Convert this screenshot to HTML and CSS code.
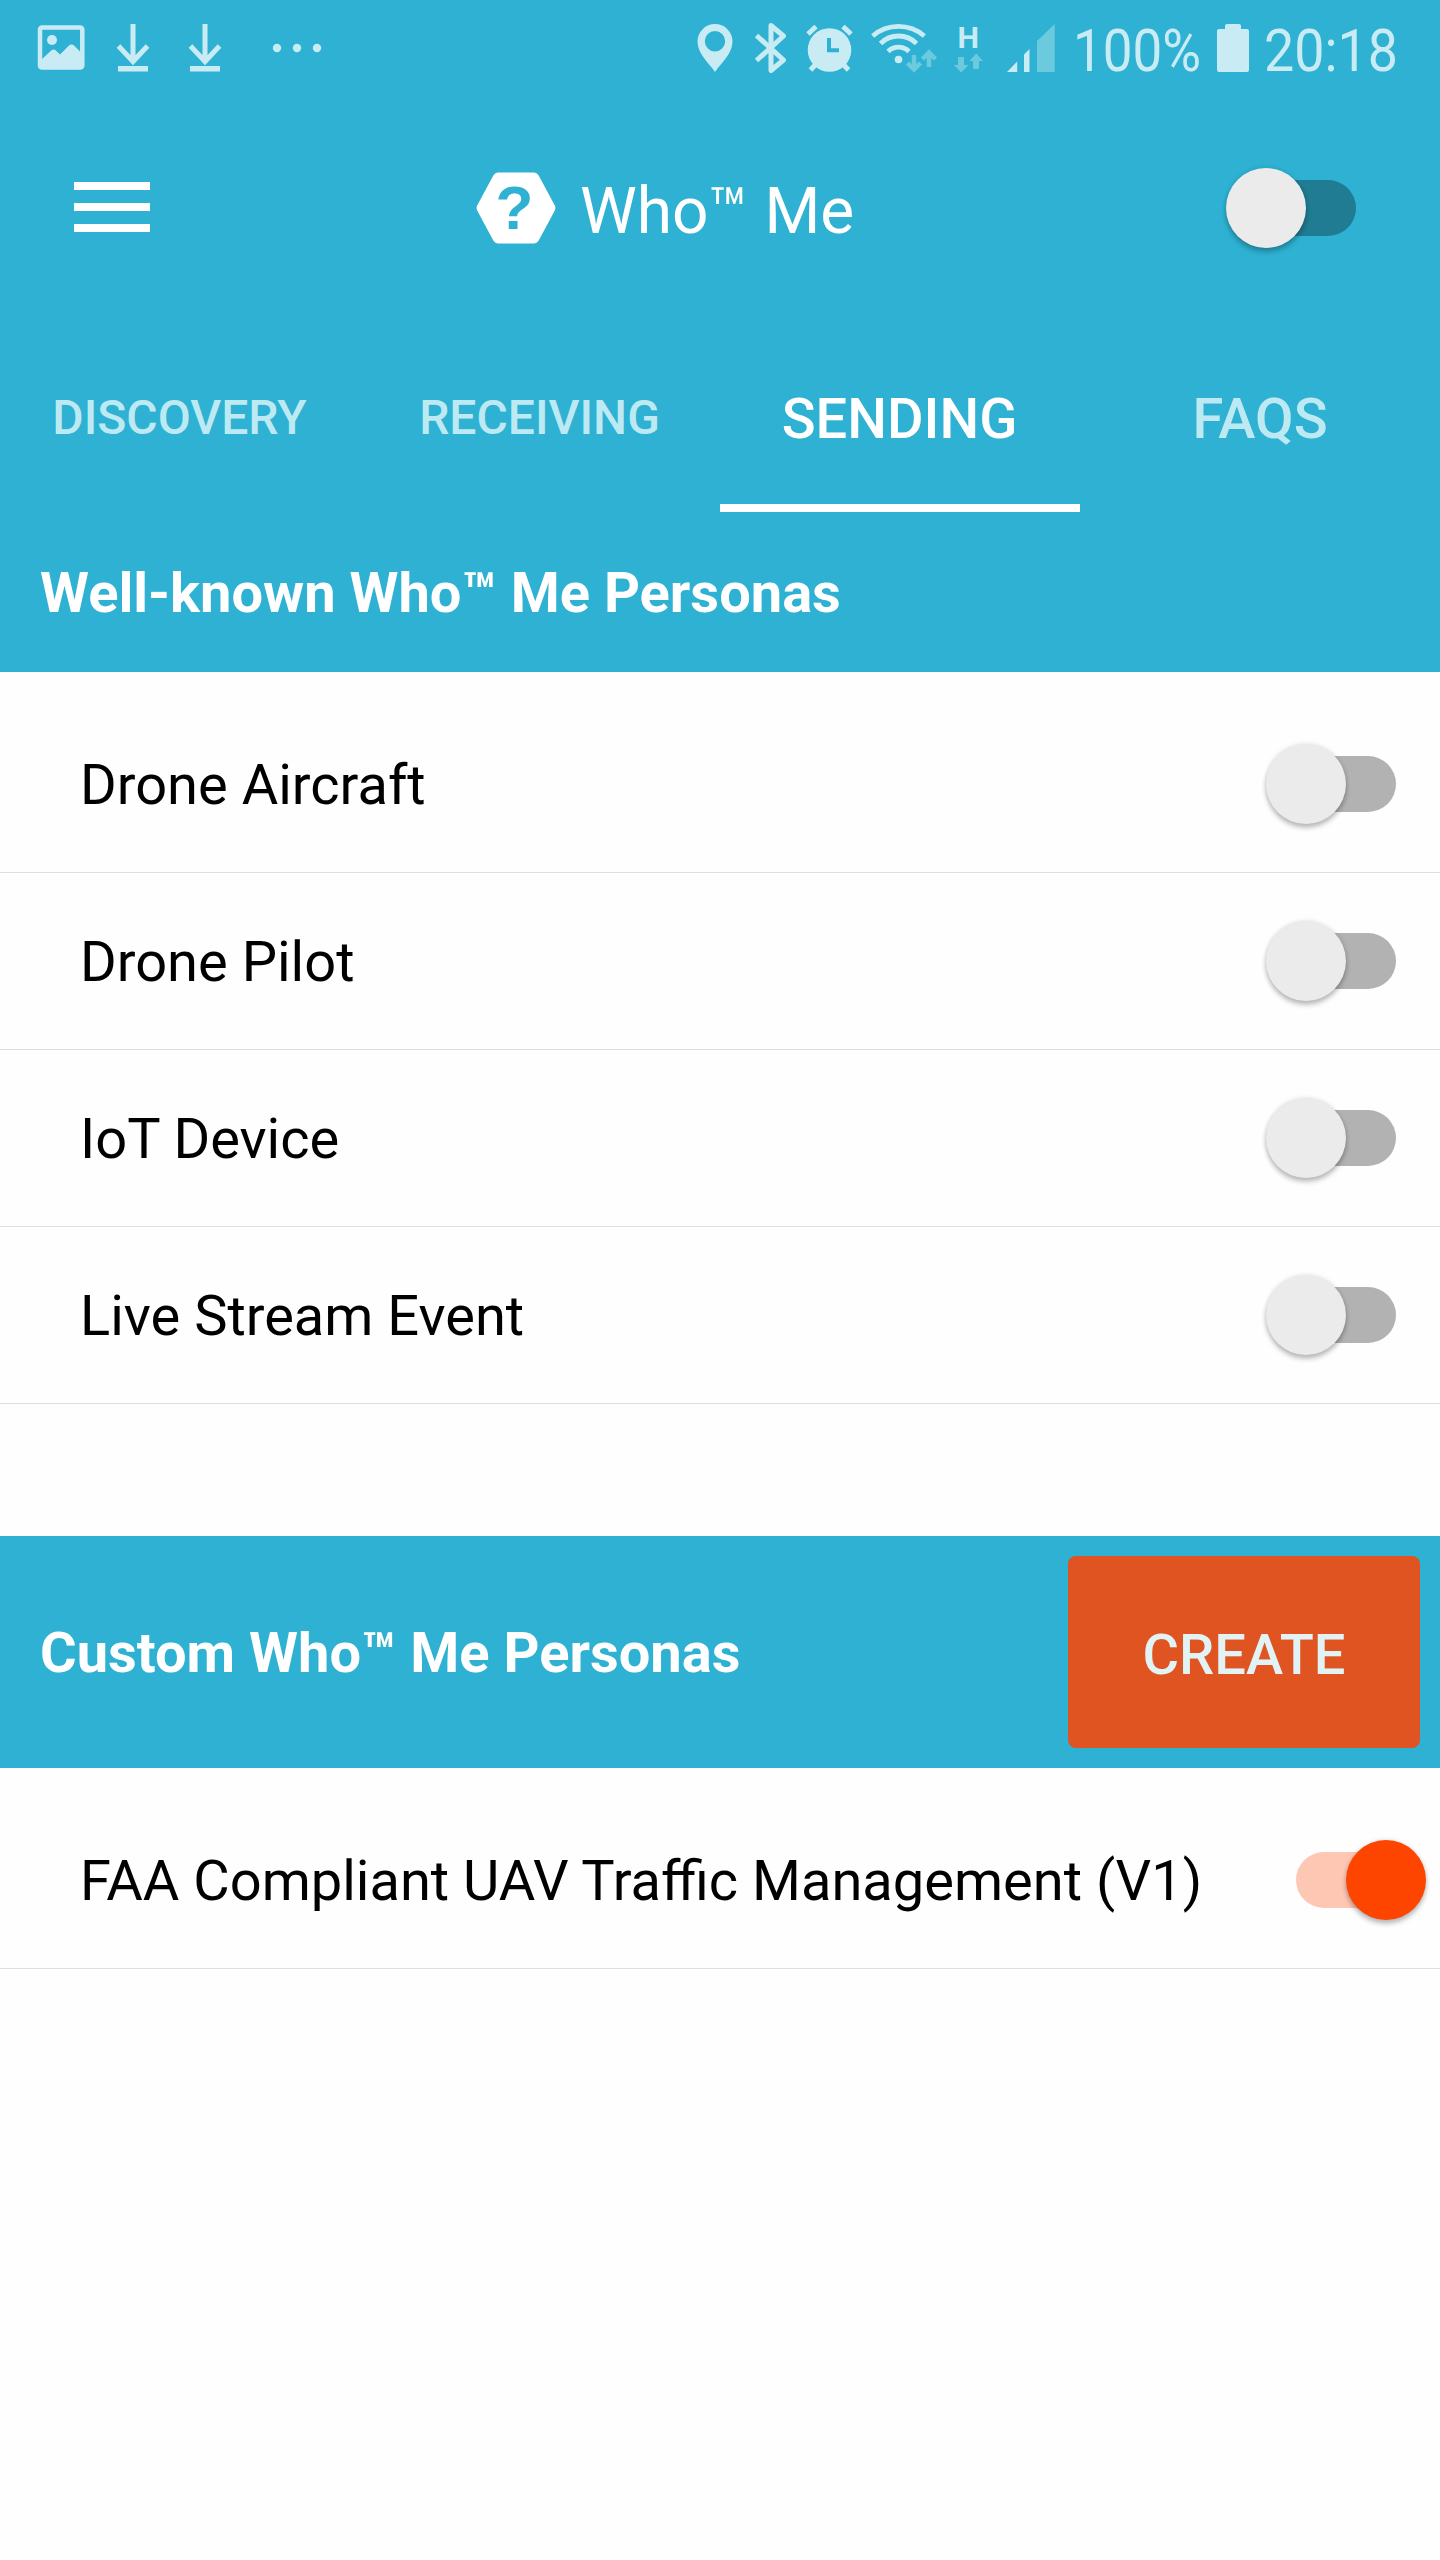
FILE: index.html
```html
<!DOCTYPE html>
<html lang="en">
<head>
<meta charset="utf-8">
<title>Who™ Me</title>
<link rel="stylesheet" href="styles.css">
</head>
<body>
<header class="header">
  <div class="status">
    <div class="status-group">
      <svg width="66" height="96" viewBox="28 0 66 96"><rect x="40" y="27.500" width="42.300" height="40" rx="2" fill="none" stroke="currentColor" stroke-width="4.500"/><circle cx="52" cy="40" r="5"/><path d="M41 60 51.500 50.300Q53.500 48.700 55.500 50.300L60 54.500 69 45.500Q71.500 43.500 74 45.500L82 53.500V68H41z"/></svg>
      <svg width="72" height="96" viewBox="94 0 72 96"><path d="M133 24v36M118.500 46 133 61.500 147.500 46" fill="none" stroke="currentColor" stroke-width="5"/><path d="M118 66h30v5.500h-30z"/></svg>
      <svg width="72" height="96" viewBox="94 0 72 96"><path d="M133 24v36M118.500 46 133 61.500 147.500 46" fill="none" stroke="currentColor" stroke-width="5"/><path d="M118 66h30v5.500h-30z"/></svg>
      <svg width="100" height="96" viewBox="238 0 100 96"><circle cx="277" cy="48" r="4.200"/><circle cx="297" cy="48" r="4.200"/><circle cx="317" cy="48" r="4.200"/></svg>
    </div>
    <div class="status-group">
      <svg width="54" height="96" viewBox="690 0 54 96"><path fill-rule="evenodd" d="M715 24a17.500 17.500 0 0 1 17.500 17.500C732.500 54 721 63 715 72 709 63 697.500 54 697.500 41.500A17.500 17.500 0 0 1 715 24zm0 7a10.200 10.200 0 1 0 0 20.400 10.200 10.200 0 0 0 0-20.400z"/></svg>
      <svg width="56" height="96" viewBox="744 0 56 96"><path d="M756.500 35.500 783.500 60 771 70.500V25.500L783.500 36 756.500 60.500" fill="none" stroke="currentColor" stroke-width="5" stroke-linejoin="round"/></svg>
      <svg width="62" height="96" viewBox="800 0 62 96"><circle cx="829.500" cy="50" r="21.800"/><path d="M808 34 816 26.500M843 26.500 851 34M810.500 70 817 63M842 63 848.500 70" stroke="currentColor" stroke-width="5"/><path class="cut" d="M829 38v12.300h10"/></svg>
      <svg width="82" height="96" viewBox="862 0 82 96"><g fill="none" stroke="currentColor" stroke-width="4.800"><path d="M872.700 36A39.700 39.700 0 0 1 924.300 36M880.500 43.500A25.400 25.400 0 0 1 916.500 43.500M888 51.500A15 15 0 0 1 909 51.500"/></g><circle cx="898.500" cy="59.500" r="3.800"/><path class="faint-line" d="M914 55v14M907.500 63 914 69.500 920.500 63M929 67V53M922.500 59 929 52.500 935.500 59"/></svg>
      <svg width="52" height="96" viewBox="944 0 52 96"><text class="network" x="957.500" y="48" textLength="21.500" lengthAdjust="spacingAndGlyphs">H</text><path class="faint" d="M958 57h6v8h4.500l-7.300 7.500-7.300-7.500h4.100zM973 69h6v-8h4l-6.800-7.500-6.800 7.500h3.600z"/></svg>
      <svg width="72" height="96" viewBox="996 0 72 96"><path d="M1007 72 1017.200 61.500V72zM1024 72V54.500L1029.500 49V72z"/><path class="faint" d="M1037 72V41L1054.700 24V72z"/></svg>
      <svg width="140" height="96" viewBox="1068 0 140 96"><text class="reading" x="1073" y="71" textLength="128" lengthAdjust="spacingAndGlyphs">100%</text></svg>
      <svg width="50" height="96" viewBox="1208 0 50 96"><path d="M1219 29h6v-3q0-2 2-2h12q2 0 2 2v3h6q2 0 2 2v39q0 2-2 2h-28q-2 0-2-2V31q0-2 2-2z"/></svg>
      <svg width="182" height="96" viewBox="1258 0 182 96"><text class="reading" x="1264" y="71" textLength="134" lengthAdjust="spacingAndGlyphs">20:18</text></svg>
    </div>
  </div>

  <div class="appbar">
    <div class="menu"><i></i><i></i><i></i></div>
    <div class="brand">
      <svg width="80" height="72" viewBox="0 0 80 72"><path d="M22.500 3h35Q59.500 3 60.500 4.700L76.500 34.500Q77.300 36 76.500 37.500L60.500 67.300Q59.500 69 57.500 69h-35Q20.500 69 19.500 67.300L3.500 37.500Q2.700 36 3.500 34.500L19.500 4.700Q20.500 3 22.500 3z" fill="#fff" stroke="#fff" stroke-width="5"/><text class="mark" x="38.500" y="57" text-anchor="middle">?</text></svg>
      <h1>Who™ Me</h1>
    </div>
    <span class="switch dark"></span>
  </div>

  <nav class="tabs">
    <a class="tab small">DISCOVERY</a>
    <a class="tab small">RECEIVING</a>
    <a class="tab active">SENDING</a>
    <a class="tab">FAQS</a>
  </nav>
  <h2 class="known">Well-known Who™ Me Personas</h2>
</header>

<ul class="list">
  <li><span class="label">Drone Aircraft</span><span class="switch"></span></li>
  <li><span class="label">Drone Pilot</span><span class="switch"></span></li>
  <li><span class="label">IoT Device</span><span class="switch"></span></li>
  <li><span class="label">Live Stream Event</span><span class="switch"></span></li>
</ul>

<section class="custom">
  <h2>Custom Who™ Me Personas</h2>
  <button class="create">CREATE</button>
</section>
<ul class="list">
  <li><span class="label">FAA Compliant UAV Traffic Management (V1)</span><span class="switch on"></span></li>
</ul>
</body>
</html>
```
FILE: styles.css
```css
* { box-sizing: border-box; }
body {
  margin: 0;
  width: 1440px;
  min-height: 2560px;
  background: #fefefe;
  color: #000;
  font-family: Roboto, "Liberation Sans", sans-serif;
}
h1, h2, ul { margin: 0; padding: 0; }

.header { background: #2eb1d2; height: 672px; }

.status { display: flex; justify-content: space-between; height: 96px; padding-left: 28px; color: #c9ecf4; }
.status-group { display: flex; }
.status svg { display: block; fill: currentColor; }
.status .faint { fill: #6ccadf; }
.status .faint-line { fill: none; stroke: #6ccadf; stroke-width: 4.5px; }
.status .cut { fill: none; stroke: #2eb1d2; stroke-width: 4px; }
.network { font-size: 30px; font-weight: 700; }
.reading { font-size: 60px; }

.appbar { display: flex; align-items: center; height: 224px; padding: 0 84px 0 74px; }
.menu { display: flex; flex-direction: column; gap: 13px; width: 76px; padding-bottom: 2px; }
.menu i { height: 8px; background: #fff; }
.brand { display: flex; align-items: center; gap: 24px; margin: 0 auto 0 326px; }
.brand svg { display: block; }
.mark { font: 700 62px "Liberation Sans", sans-serif; fill: #2eb1d2; }
.brand h1 { color: #fff; font-size: 64px; font-weight: 400; line-height: 76px; padding-top: 7px; }

.tabs { display: flex; height: 192px; }
.tab {
  width: 360px;
  padding-top: 66px;
  border-bottom: 8px solid transparent;
  color: #bdeaf2;
  font-size: 56px;
  font-weight: 500;
  line-height: 66px;
  text-align: center;
}
.tab.small { font-size: 48px; padding-top: 65px; padding-right: 1px; }
.tab.active { color: #fff; border-color: #fff; padding-right: 1px; }

h2 { color: #fff; font-size: 56px; font-weight: 700; line-height: 66px; padding: 2px 0 0 40px; }
.known { padding-top: 48px; }

.list { list-style: none; padding-top: 24px; }
.list li {
  display: flex;
  align-items: center;
  justify-content: space-between;
  height: 177px;
  padding: 0 14px 0 80px;
  border-bottom: 1px solid #dedede;
  font-size: 56px;
  line-height: 66px;
}
.label { padding-top: 2px; }

.switch { position: relative; width: 160px; height: 80px; }
.switch::before {
  content: "";
  position: absolute;
  left: 20px;
  top: 12px;
  width: 110px;
  height: 56px;
  border-radius: 28px;
  background: #b2b2b2;
}
.switch::after {
  content: "";
  position: absolute;
  left: 0;
  top: 0;
  width: 80px;
  height: 80px;
  border-radius: 50%;
  background: #ebebeb;
  box-shadow: 0 4px 5px rgba(0, 0, 0, .24), 0 0 5px rgba(0, 0, 0, .12);
}
.switch.dark { width: 130px; }
.switch.dark::before { background: #1f7c92; }
.switch.on::before { left: 30px; background: #fec7b3; }
.switch.on::after { left: 80px; background: #fd4500; }

.custom {
  display: flex;
  align-items: center;
  justify-content: space-between;
  height: 232px;
  margin-top: 132px;
  padding-right: 20px;
  background: #2eb1d2;
}
.create {
  width: 352px;
  height: 192px;
  border: 0;
  padding: 6px 0 0;
  border-radius: 8px;
  background: #df5420;
  color: #e2f3f6;
  font: 500 56px/66px Roboto, "Liberation Sans", sans-serif;
}
```
